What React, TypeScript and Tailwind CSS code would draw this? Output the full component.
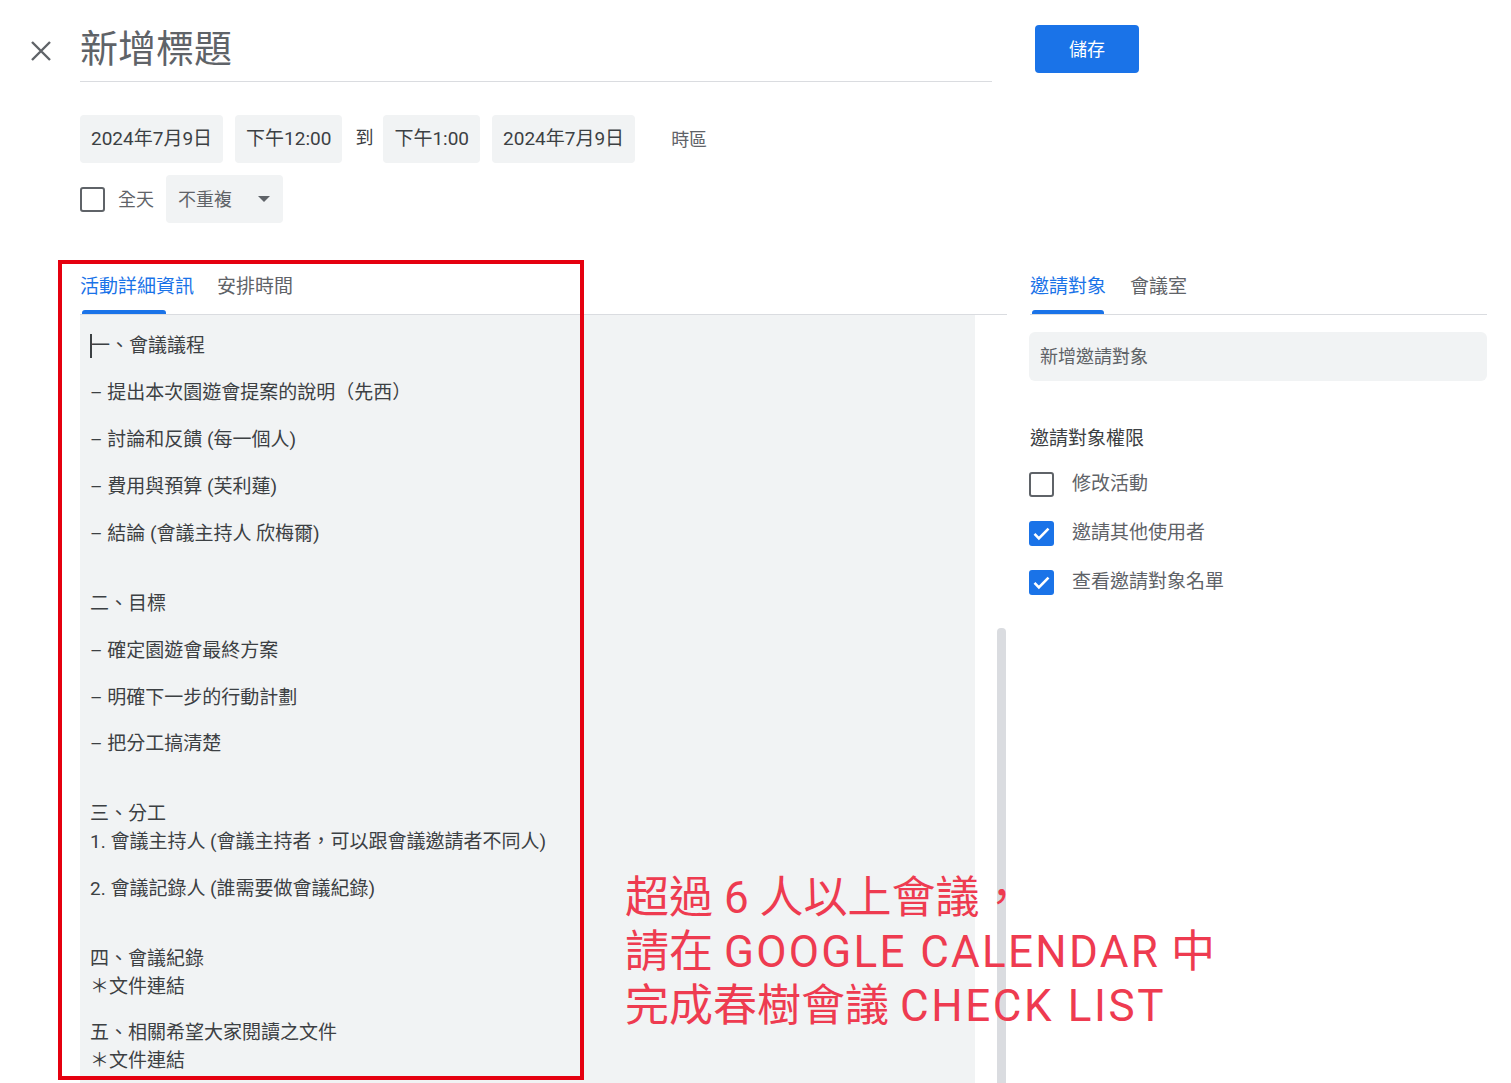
import React from "react";

const FONT = "font-['Roboto','Noto_Sans_CJK_TC',sans-serif]";

const NOTES: { text: string; mt: number }[] = [
  { text: "一、會議議程", mt: 0 },
  { text: "– 提出本次園遊會提案的說明（先西）", mt: 19 },
  { text: "– 討論和反饋 (每一個人)", mt: 19 },
  { text: "– 費用與預算 (芙利蓮)", mt: 19 },
  { text: "– 結論 (會議主持人 欣梅爾)", mt: 19 },
  { text: "二、目標", mt: 42 },
  { text: "– 確定園遊會最終方案", mt: 19 },
  { text: "– 明確下一步的行動計劃", mt: 19 },
  { text: "– 把分工搞清楚", mt: 18 },
  { text: "三、分工", mt: 42 },
  { text: "1. 會議主持人 (會議主持者，可以跟會議邀請者不同人)", mt: 0 },
  { text: "2. 會議記錄人 (誰需要做會議紀錄)", mt: 19 },
  { text: "四、會議紀錄", mt: 42 },
  { text: "＊文件連結", mt: 0 },
  { text: "五、相關希望大家閱讀之文件", mt: 18 },
  { text: "＊文件連結", mt: 0 },
];

function Chip({ children }: { children: React.ReactNode }) {
  return (
    <div className="h-[48px] px-[11px] flex items-center rounded-[4px] bg-[#f1f3f4] text-[19px] text-[#3c4043]">
      {children}
    </div>
  );
}

function Box({ checked }: { checked?: boolean }) {
  if (checked) {
    return (
      <div className="w-[25px] h-[25px] rounded-[3px] bg-[#1a73e8] flex items-center justify-center">
        <svg width="21" height="21" viewBox="0 0 24 24">
          <path d="M4 12.5l5 5L20 6.5" fill="none" stroke="#fff" strokeWidth="3" />
        </svg>
      </div>
    );
  }
  return <div className="w-[25px] h-[25px] rounded-[3px] border-[2px] border-[#5f6368]" />;
}

function Tab({ label, active, bar }: { label: string; active?: boolean; bar: number }) {
  return (
    <div className="flex flex-col">
      <span className={`text-[19px] leading-[26px] ${active ? "text-[#1a73e8]" : "text-[#5f6368]"}`}>{label}</span>
      <div
        className={`mt-[10px] ml-[2px] h-[4px] rounded-t-[3px] ${active ? "bg-[#1a73e8]" : ""}`}
        style={{ width: bar }}
      />
    </div>
  );
}

export default function App() {
  return (
    <div className={`relative w-[1511px] h-[1083px] overflow-hidden bg-white ${FONT}`}>
      {/* header */}
      <div className="flex items-start">
        <div className="w-[80px] h-[81px] flex items-center justify-center">
          <svg width="24" height="24" viewBox="0 0 24 24" className="mt-[20px] ml-[2px]">
            <path d="M3 3l18 18M21 3L3 21" stroke="#5f6368" strokeWidth="2.4" />
          </svg>
        </div>
        <div className="w-[912px] h-[82px] border-b border-[#dadce0] flex items-center pt-[16px]">
          <span className="text-[38px] text-[#5f6368] leading-none">新增標題</span>
        </div>
        <button
          type="button"
          className="ml-[43px] mt-[25px] w-[104px] h-[48px] rounded-[4px] bg-[#1a73e8] text-white text-[18px]"
        >
          儲存
        </button>
      </div>

      {/* date row */}
      <div className="pl-[80px] mt-[33px] flex items-center">
        <Chip>2024年7月9日</Chip>
        <div className="ml-[12px]">
          <Chip>下午12:00</Chip>
        </div>
        <span className="ml-[13px] mr-[10px] text-[18px] text-[#3c4043] -mt-[3px]">到</span>
        <Chip>下午1:00</Chip>
        <div className="ml-[12px]">
          <Chip>2024年7月9日</Chip>
        </div>
        <span className="ml-[36px] text-[18px] text-[#5f6368]">時區</span>
      </div>

      {/* all day row */}
      <div className="pl-[80px] mt-[12px] flex items-center">
        <Box />
        <span className="ml-[13px] text-[18px] text-[#5f6368]">全天</span>
        <div className="ml-[12px] h-[48px] w-[117px] rounded-[4px] bg-[#f1f3f4] flex items-center pl-[12px] text-[18px] text-[#5f6368]">
          不重複
          <svg width="12" height="6" viewBox="0 0 12 6" className="ml-[26px]">
            <path d="M0 0h12L6 6z" fill="#5f6368" />
          </svg>
        </div>
      </div>

      {/* body */}
      <div className="mt-[37px] flex">
        <div className="ml-[80px] w-[927px]">
          <div className="flex items-end h-[55px] border-b border-[#dadce0]">
            <Tab label="活動詳細資訊" active bar={84} />
            <div className="ml-[23px]">
              <Tab label="安排時間" bar={0} />
            </div>
          </div>
          <div className="flex">
            <div className="w-[895px] h-[800px] bg-[#f1f3f4] pl-[10px] pt-[17px]">
              {NOTES.map((n, i) => (
                <div
                  key={i}
                  className="flex items-center leading-[28px] text-[19px] text-[#3c4043]"
                  style={{ marginTop: n.mt }}
                >
                  {i === 0 && <span className="w-[2px] h-[24px] bg-[#3c4043] mr-[-1px]" />}
                  {n.text}
                </div>
              ))}
            </div>
            <div className="ml-[22px] mt-[313px] w-[9px] h-[500px] rounded-t-[4px] bg-[#dadce0]" />
          </div>
        </div>

        <div className="ml-[23px] w-[457px]">
          <div className="flex items-end h-[55px] border-b border-[#dadce0]">
            <Tab label="邀請對象" active bar={72} />
            <div className="ml-[24px]">
              <Tab label="會議室" bar={0} />
            </div>
          </div>
          <div className="mt-[17px] -ml-[1px] h-[49px] rounded-[6px] bg-[#f1f3f4] flex items-center pl-[11px] text-[18px] text-[#5f6368]">
            新增邀請對象
          </div>
          <div className="mt-[45px] text-[19px] text-[#3c4043] leading-[26px]">邀請對象權限</div>
          <div className="mt-[20px] flex flex-col gap-[24px] -ml-[1px]">
            {[
              { label: "修改活動", checked: false },
              { label: "邀請其他使用者", checked: true },
              { label: "查看邀請對象名單", checked: true },
            ].map((r) => (
              <div key={r.label} className="flex items-center h-[25px]">
                <Box checked={r.checked} />
                <span className="ml-[18px] text-[19px] text-[#5f6368]">{r.label}</span>
              </div>
            ))}
          </div>
        </div>
      </div>

      {/* annotation overlay */}
      <div className="absolute left-[58px] top-[260px] w-[526px] h-[820px] border-[4px] border-[#e5000f]" />
      <div className="absolute left-[625px] top-[871px] text-[44px] leading-[54px] text-[#ee3b50] whitespace-pre">
        <div>超過 6 人以上會議，</div>
        <div>
          請在 <span className="tracking-[2.3px]">GOOGLE CALENDAR</span> 中
        </div>
        <div>
          完成春樹會議 <span className="tracking-[2.6px]">CHECK LIST</span>
        </div>
      </div>
    </div>
  );
}
